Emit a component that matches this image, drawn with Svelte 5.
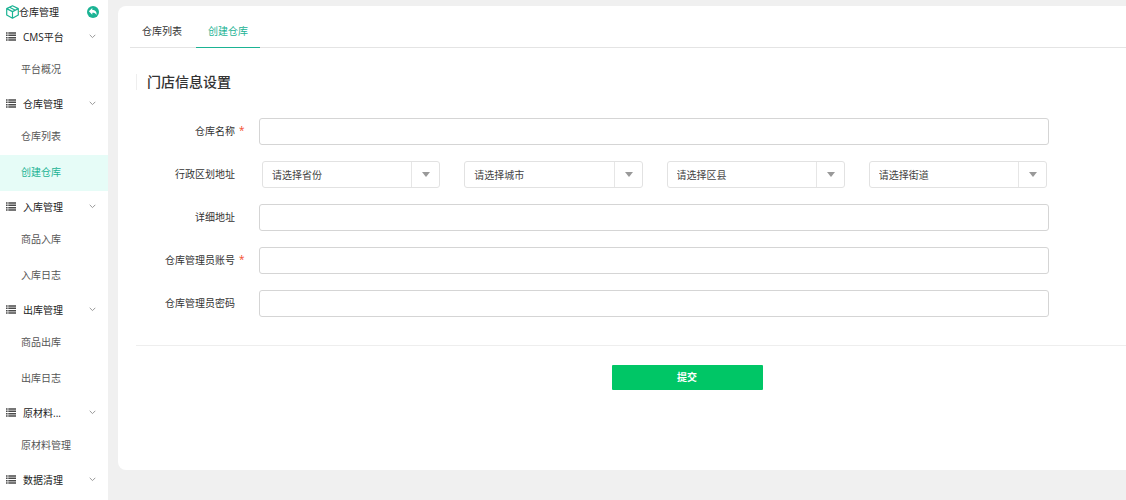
<script>
  const groups = [
    { title: 'CMS平台', items: ['平台概况'] },
    { title: '仓库管理', items: ['仓库列表', '创建仓库'] },
    { title: '入库管理', items: ['商品入库', '入库日志'] },
    { title: '出库管理', items: ['商品出库', '出库日志'] },
    { title: '原材料...', items: ['原材料管理'] },
    { title: '数据清理', items: [] }
  ];
  const current = '创建仓库';
  const regions = ['请选择省份', '请选择城市', '请选择区县', '请选择街道'];
</script>

{#snippet field(id, label, required, type)}
  <div class="row">
    <label for={id}>{label}</label>
    <span class="mark">{required ? '*' : ''}</span>
    <input {id} {type} {required} autocomplete="off" />
  </div>
{/snippet}

<div class="page">
  <aside>
    <div class="brand">
      <svg width="13" height="14" viewBox="0 0 13 14" fill="none" stroke="#1bb394" stroke-width="1.2" stroke-linejoin="round">
        <path d="M6.500.8 12.300 3.600V10L6.500 13.200.7 10V3.600ZM.7 3.600 6.500 6.600l5.800-3M6.500 6.600v6.600M3.600 2.300l5.800 3" />
      </svg>
      <span>仓库管理</span>
      <button class="back" type="button" aria-label="返回">
        <svg width="12" height="12" viewBox="0 0 12 12">
          <circle cx="6" cy="6" r="6" fill="#1bb394" />
          <path d="M5.300 2v1.900c2.900 0 4.700 1.500 4.200 5.100-.8-1.700-2-2.200-4.200-2.200v1.900L1.900 5.300Z" fill="#fff" />
        </svg>
      </button>
    </div>
    <nav>
      {#each groups as group}
        <button class="group" type="button">
          <svg width="10" height="9" viewBox="0 0 10 9" fill="#4a4a4a">
            <path d="M0 .3h1.600v1.500H0zM2.300.3H10v1.500H2.300zM0 2.600h1.600v1.500H0zM2.300 2.600H10v1.500H2.300zM0 4.900h1.600v1.500H0zM2.300 4.900H10v1.500H2.300zM0 7.200h1.600v1.500H0zM2.300 7.200H10v1.500H2.300z" />
          </svg>
          <span>{group.title}</span>
          <svg class="chevron" width="7" height="5" viewBox="0 0 7 5" fill="none" stroke="#999">
            <path d="M.7.8 3.500 3.600 6.300.8" />
          </svg>
        </button>
        {#each group.items as item}
          <a href="#top" class:active={item === current}>{item}</a>
        {/each}
      {/each}
    </nav>
  </aside>

  <main>
    <section class="card">
      <div class="tabs">
        <a href="#top">仓库列表</a>
        <a href="#top" class="active">创建仓库</a>
      </div>
      <form>
        <h1>门店信息设置</h1>
        <div class="rows">
          {@render field('name', '仓库名称', true, 'text')}
          <div class="row">
            <label for="region0">行政区划地址</label>
            <span class="mark"></span>
            <div class="regions">
              {#each regions as region, i}
                <div class="select">
                  <select id={'region' + i} aria-label={region}>
                    <option>{region}</option>
                  </select>
                  <span class="arrow">
                    <svg width="8" height="5" viewBox="0 0 8 5"><path d="M0 0h8L4 5Z" fill="#999" /></svg>
                  </span>
                </div>
              {/each}
            </div>
          </div>
          {@render field('address', '详细地址', false, 'text')}
          {@render field('account', '仓库管理员账号', true, 'text')}
          {@render field('password', '仓库管理员密码', false, 'password')}
        </div>
        <div class="actions">
          <button type="submit">提交</button>
        </div>
      </form>
    </section>
  </main>
</div>

<style>
  :global(body) {
    background: #f0f0f0;
  }
  .page,
  .page * {
    box-sizing: border-box;
  }
  .page {
    display: flex;
    min-height: 100vh;
    overflow: hidden;
    font: 10px/16px 'Open Sans', 'Noto Sans CJK SC', sans-serif;
    color: #333;
  }
  button,
  input,
  select {
    font: inherit;
    color: inherit;
  }
  a {
    color: inherit;
    text-decoration: none;
  }
  aside {
    flex: none;
    width: 108px;
    height: 100vh;
    overflow: hidden;
    background: #fff;
  }
  .brand {
    display: flex;
    align-items: center;
    height: 21px;
    padding: 3px 9px 0 6px;
    color: #222;
  }
  .back {
    display: flex;
    margin-left: auto;
    padding: 0;
    border: 0;
    background: none;
  }
  nav {
    display: flex;
    flex-direction: column;
  }
  .group {
    display: flex;
    align-items: center;
    gap: 7px;
    height: 31px;
    padding: 0 12px 0 6px;
    border: 0;
    background: none;
    color: #222;
  }
  .chevron {
    margin-left: auto;
  }
  nav a {
    height: 36px;
    padding-left: 21px;
    line-height: 34px;
    color: #555;
  }
  nav a.active {
    background: #e6fcf7;
    color: #1bb394;
  }
  main {
    flex: 1;
    min-width: 0;
    padding: 6px 0 30px 10px;
  }
  .card {
    height: 100%;
    padding: 10px 0 0 12px;
    border-radius: 8px 0 0 8px;
    background: #fff;
  }
  .tabs {
    display: flex;
    gap: 2px;
    border-bottom: 1px solid #e4e4e4;
  }
  .tabs a {
    height: 32px;
    margin-bottom: -1px;
    padding: 0 12px;
    line-height: 30px;
  }
  .tabs a.active {
    border-bottom: 1px solid #1bb394;
    color: #1bb394;
  }
  form {
    padding: 26px 0 0 6px;
  }
  h1 {
    margin: 0;
    padding-left: 10px;
    border-left: 1px solid #eee;
    font-size: 14px;
    line-height: 16px;
    font-weight: 500;
  }
  .rows {
    display: grid;
    gap: 16px;
    padding: 28px 77px 28px 0;
    border-bottom: 1px solid #eee;
  }
  .row {
    display: grid;
    grid-template-columns: 99px 24px 1fr;
    align-items: center;
  }
  label {
    padding-bottom: 2px;
    text-align: right;
  }
  .mark {
    padding: 0 0 4px 4px;
    color: #f44a2a;
  }
  input {
    width: 100%;
    height: 27px;
    padding: 0 8px;
    border: 1px solid #d5d5d5;
    border-radius: 3px;
    background: #fff;
  }
  .regions {
    display: grid;
    grid-template-columns: repeat(4, 1fr);
    gap: 24px;
    padding: 0 2px 0 3px;
  }
  .select {
    display: grid;
    grid-template-columns: 1fr 29px;
  }
  select {
    grid-area: 1 / 1 / 2 / 3;
    height: 27px;
    min-width: 0;
    padding: 0 30px 0 9px;
    border: 1px solid #e2e2e2;
    border-radius: 3px;
    background: #fff;
    appearance: none;
    color: #444;
  }
  .arrow {
    grid-area: 1 / 2;
    display: grid;
    place-items: center;
    margin: 1px 0;
    border-left: 1px solid #e6e6e6;
    pointer-events: none;
  }
  .actions {
    display: flex;
    justify-content: center;
    padding: 19px 0 0 112px;
  }
  .actions button {
    width: 151px;
    height: 25px;
    padding: 0 0 2px;
    border: 0;
    border-radius: 1px;
    background: #00c666;
    color: #fff;
    font-weight: 700;
  }
</style>
